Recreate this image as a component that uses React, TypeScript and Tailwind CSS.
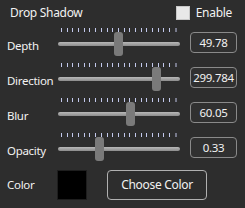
import React from 'react';

type SliderRow = { label: string; value: number; max: number; text: string };

const rows: SliderRow[] = [
  { label: 'Depth', value: 49.78, max: 100, text: '49.78' },
  { label: 'Direction', value: 299.784, max: 360, text: '299.784' },
  { label: 'Blur', value: 60.05, max: 100, text: '60.05' },
  { label: 'Opacity', value: 0.33, max: 1, text: '0.33' },
];

function Slider({ value, max }: { value: number; max: number }) {
  // track is 122px wide, thumb 9px
  const left = Math.round((value / max) * (122 - 9));
  return (
    <div className="relative h-[35px] w-[122px]">
      {/* Tick marks */}
      <div className="flex items-start justify-between pl-[3px] pr-[3px] pt-[1px]">
        {Array.from({ length: 20 }).map((_, i) => (
          <div key={i} className="h-[4px] w-px bg-[#c3c9ec]" />
        ))}
        <div className="h-[4px] w-[2px] bg-[#77798a]" />
      </div>
      {/* Track */}
      <div className="mt-[10px] h-[4px] w-full rounded-full bg-gradient-to-b from-[#b8b8b8] to-[#8c8c8c]" />
      {/* Thumb */}
      <div
        className="absolute top-[5px] h-[24px] w-[9px] rounded-[3px] bg-[#7a7a7a]"
        style={{ left }}
      />
    </div>
  );
}

export default function App() {
  return (
    <div
      className="h-[208px] w-[245px] overflow-hidden bg-[#2d2d2d] text-[11.5px] tracking-[-0.3px] text-[#f2f2f2]"
      style={{ fontFamily: '"Noto Sans", "Open Sans", sans-serif' }}
    >
      {/* Header */}
      <div className="flex h-[26px] items-center justify-between pl-[10px] pr-[13px]">
        <span className="text-[12px]">Drop Shadow</span>
        <div className="flex items-center gap-[6px]">
          <div className="h-[14px] w-[14px] border border-[#c8c8c8] bg-[#e8e8e8]" />
          <span className="text-[12px]">Enable</span>
        </div>
      </div>

      {/* Slider rows */}
      <div className="mt-[1px] flex flex-col">
        {rows.map((r) => (
          <div key={r.label} className="flex h-[35px] items-center pl-[7px]">
            <span className="w-[51px] pt-[2px]">{r.label}</span>
            <Slider value={r.value} max={r.max} />
            <div className="ml-[10px] -mt-[4px] flex h-[21px] w-[47px] items-center justify-center rounded-[4px] border border-[#8a8a8a] bg-[#303030] text-[11.5px]">
              {r.text}
            </div>
          </div>
        ))}
      </div>

      {/* Color row */}
      <div className="mt-[3px] flex items-center pl-[7px]">
        <span className="w-[50px]">Color</span>
        <div className="h-[30px] w-[30px] border border-[#1e1e1e] bg-black" />
        <button className="ml-[20px] flex h-[30px] w-[100px] items-center justify-center rounded-[4px] border border-[#b0b0b0] bg-[#2d2d2d] text-[12px] text-[#f2f2f2]">
          Choose Color
        </button>
      </div>
    </div>
  );
}
